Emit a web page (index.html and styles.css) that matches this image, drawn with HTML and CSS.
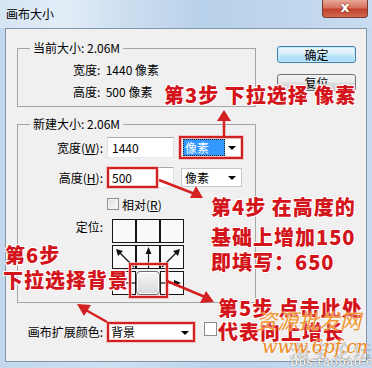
FILE: index.html
```html
<!DOCTYPE html>
<html>
<head>
    <meta charset="utf-8">
    <title>画布大小</title>
    <link rel="stylesheet" href="styles.css">
</head>
<body>
<div class="win">
    <div class="titlebar">
        <span class="title">画布大小</span>
        <div class="close-btn">x</div>
    </div>

    <div class="client">
        <div class="left-col">
            <fieldset class="group group-cur">
                <legend>当前大小: 2.06M</legend>
                <div class="info-row">宽度:&nbsp; 1440 像素</div>
                <div class="info-row">高度:&nbsp; 500 像素</div>
            </fieldset>

            <fieldset class="group group-new">
                <legend>新建大小: 2.06M</legend>
                <div class="form-row row-w">
                    <label class="lbl">宽度(<u>W</u>):</label>
                    <div class="textbox">1440</div>
                    <div class="select"><span class="sel-text focused">像素</span><span class="caret"></span></div>
                </div>
                <div class="form-row row-h">
                    <label class="lbl">高度(<u>H</u>):</label>
                    <div class="textbox">500</div>
                    <div class="select"><span class="sel-text">像素</span><span class="caret"></span></div>
                </div>
                <div class="form-row row-chk">
                    <span class="lbl"></span>
                    <span class="checkbox"></span>
                    <span class="chk-text">相对(<u>R</u>)</span>
                </div>
                <div class="form-row row-anchor">
                    <span class="lbl">定位:</span>
                    <div class="anchor">
                        <div class="cell"></div>
                        <div class="cell"></div>
                        <div class="cell"></div>
                        <div class="cell">
                            <svg width="22" height="22" viewBox="0 0 22 22"><line x1="21" y1="21" x2="7" y2="7" stroke="#111" stroke-width="1.2"/><polygon points="3,3 10,5 5,10" fill="#111"/></svg>
                        </div>
                        <div class="cell">
                            <svg width="22" height="22" viewBox="0 0 22 22"><line x1="11.5" y1="22" x2="11.5" y2="6" stroke="#111" stroke-width="1.2"/><polygon points="11.5,1 8.5,8 14.5,8" fill="#111"/></svg>
                        </div>
                        <div class="cell">
                            <svg width="22" height="22" viewBox="0 0 22 22"><line x1="1" y1="21" x2="15" y2="7" stroke="#111" stroke-width="1.2"/><polygon points="19,3 12,5 17,10" fill="#111"/></svg>
                        </div>
                        <div class="cell">
                            <svg width="22" height="22" viewBox="0 0 22 22"><line x1="22" y1="11" x2="7" y2="11" stroke="#111" stroke-width="1.2"/><polygon points="2,11 9,8 9,14" fill="#111"/></svg>
                        </div>
                        <div class="cell on"></div>
                        <div class="cell">
                            <svg width="22" height="22" viewBox="0 0 22 22"><line x1="0" y1="11" x2="15" y2="11" stroke="#111" stroke-width="1.2"/><polygon points="20,11 13,8 13,14" fill="#111"/></svg>
                        </div>
                    </div>
                </div>
            </fieldset>

            <div class="form-row row-bg">
                <label class="lbl lbl-wide">画布扩展颜色:</label>
                <div class="select select-bg"><span class="sel-text">背景</span><span class="caret"></span></div>
                <span class="swatch"></span>
            </div>
        </div>

        <div class="right-col">
            <div class="btn btn-default">确定</div>
            <div class="btn">复位</div>
        </div>
    </div>

    <!-- red marks drawn over the dialog -->
    <svg class="marks" width="372" height="368" viewBox="0 0 372 368">
        <g fill="none" stroke="#f6b4b4" stroke-width="4" opacity="0.7">
            <rect x="180" y="137" width="62" height="21"/>
            <rect x="108" y="168" width="49" height="19"/>
            <rect x="130" y="264" width="37" height="33"/>
            <rect x="108" y="323" width="86" height="18"/>
        </g>
        <g fill="none" stroke="#d02222" stroke-width="2">
            <rect x="180" y="137" width="62" height="21"/>
            <rect x="108" y="168" width="49" height="19"/>
            <rect x="130" y="264" width="37" height="33"/>
            <rect x="108" y="323" width="86" height="18"/>
        </g>
        <g stroke="#d42020" stroke-width="2.5" fill="#d42020">
            <line x1="224" y1="136" x2="224" y2="118"/>
            <polygon points="224,110 217,121 231,121" stroke="none"/>
            <line x1="159" y1="180" x2="195" y2="194"/>
            <polygon points="203,198 190,198 196,186" stroke="none"/>
            <line x1="107" y1="322" x2="84" y2="309"/>
            <polygon points="77,304 91,305 84,316" stroke="none"/>
            <line x1="167" y1="281" x2="205" y2="297"/>
            <polygon points="214,302 200,303 206,291" stroke="none"/>
        </g>
    </svg>

    <div class="note" style="left:164px;top:84px">第3步 下拉选择 像素</div>
    <div class="note" style="left:211px;top:196px">第4步 在高度的</div>
    <div class="note" style="left:211px;top:226px">基础上增加150</div>
    <div class="note" style="left:211px;top:251px">即填写：650</div>
    <div class="note" style="left:218px;top:297px">第5步 点击此处</div>
    <div class="note" style="left:218px;top:321px">代表向上增长</div>
    <div class="note" style="left:5px;top:244px">第6步</div>
    <div class="note" style="left:3px;top:269px">下拉选择背景</div>

    <div class="mark mark-site" style="left:256px;top:308px">资源批发网</div>
    <div class="mark mark-faint" style="left:290px;top:339px">淘宝论坛</div>
    <div class="mark mark-url" style="left:262px;top:335px">www.6pf.cn</div>
    <div class="mark mark-bbs" style="left:290px;top:355px">bbs.taobao.com</div>
</div>
</body>
</html>
```

FILE: styles.css
```css
body {
    margin: 0;
    font-family: "Noto Sans CJK SC", "Liberation Sans", sans-serif;
    font-size: 12px;
    color: #000;
}

.win {
    position: relative;
    width: 372px;
    height: 368px;
    overflow: hidden;
    display: flex;
    flex-direction: column;
    background: linear-gradient(90deg, #c3d8ec, #cfe0f1 30%, #bcd3eb 60%, #c6dbef);
}

.titlebar {
    height: 28px;
    flex: none;
    display: flex;
    align-items: flex-start;
    background: linear-gradient(90deg, #d6e5f3 0%, #e2edf8 18%, #cfe0f1 32%, #b7d0e9 55%, #bfd5ec 75%, #c9ddf0 100%);
}
.title {
    margin: 6px 0 0 6px;
    line-height: 16px;
    font-size: 12px;
}
.close-btn {
    margin-left: auto;
    margin-right: 4px;
    width: 44px;
    height: 17px;
    border: 1px solid #7a3b30;
    border-top: none;
    border-radius: 0 0 4px 4px;
    background: linear-gradient(#e9a99a, #d7725c 45%, #c2412a 55%, #d2694f);
    color: #fff;
    font: bold 14px "DejaVu Sans", sans-serif;
    line-height: 15px;
    text-align: center;
    text-shadow: 0 0 2px #5a1a10;
}

.client {
    margin: 0 5px;
    height: 334px;
    box-sizing: border-box;
    border: 1px solid #8595a8;
    background: #f0f0f0;
    display: flex;
    padding: 11px 0 0 11px;
}

.left-col {
    width: 239px;
}
.right-col {
    margin: 6px 0 0 21px;
    width: 79px;
}

.group {
    margin: 0;
    padding: 3px 0 3px 0;
    width: 239px;
    box-sizing: border-box;
    border: 1px solid #a5a5a5;
    min-inline-size: 0;
}
.group legend {
    margin-left: 12px;
    padding: 0 3px;
    line-height: 16px;
}
.info-row {
    padding-left: 55px;
    line-height: 22px;
}
.group-new {
    margin-top: 9px;
    padding: 5px 0 7px 0;
}

.form-row {
    display: flex;
    align-items: center;
}
.lbl {
    width: 85px;
    margin-right: 4px;
    text-align: right;
    flex: none;
}
.lbl-wide {
    width: 86px;
}
.row-h {
    margin-top: 9px;
}
.row-chk {
    margin-top: 8px;
    height: 16px;
}
.row-anchor {
    margin-top: 7px;
    align-items: flex-start;
}
.row-anchor .lbl {
    line-height: 16px;
}

.textbox {
    width: 67px;
    height: 21px;
    box-sizing: border-box;
    border: 1px solid;
    border-color: #a4a9b1 #dde2e8 #e3e9ef #dde2e8;
    background: #fff;
    padding-left: 4px;
    line-height: 19px;
}

.select {
    position: relative;
    margin-left: 7px;
    width: 61px;
    height: 19px;
    box-sizing: border-box;
    border: 1px solid #c9c9c9;
    background: #fff;
    padding: 1px;
}
.sel-text {
    display: block;
    width: 39px;
    height: 15px;
    line-height: 15px;
    padding-left: 1px;
    border: 1px dotted transparent;
    box-sizing: content-box;
    margin-top: -1px;
}
.sel-text.focused {
    background: #3399ff;
    color: #fff;
    border-color: #222;
}
.caret {
    position: absolute;
    right: 5px;
    top: 7px;
    border-left: 4px solid transparent;
    border-right: 4px solid transparent;
    border-top: 4px solid #000;
}

.checkbox {
    width: 12px;
    height: 12px;
    box-sizing: border-box;
    border: 1px solid #8e8f8f;
    background: linear-gradient(135deg, #dcdcdc, #fbfbfb);
    box-shadow: inset 0 0 0 1px #f4f4f4;
}
.chk-text {
    margin-left: 3px;
}

.anchor {
    margin-left: 5px;
    display: grid;
    grid-template-columns: repeat(3, 24px);
    grid-template-rows: repeat(3, 24px);
    row-gap: 2px;
}
.cell {
    box-sizing: border-box;
    border: 1px solid #151515;
    background: #fafafa;
}
.cell svg {
    display: block;
}
.cell.on {
    border: 1px solid #6a6a6a;
    border-radius: 4px;
    background: linear-gradient(#f6f6f6, #d9d9d9);
    box-shadow: inset 0 0 0 1px #fff;
}

.row-bg {
    margin-top: 19px;
    align-items: flex-start;
}
.row-bg .lbl {
    line-height: 20px;
}
.select-bg {
    margin-left: 0;
    width: 88px;
    height: 20px;
}
.select-bg .caret {
    top: 8px;
}
.swatch {
    margin-left: 9px;
    width: 13px;
    height: 14px;
    box-sizing: border-box;
    border: 1px solid #8a8a8a;
    background: #fff;
}

.btn {
    height: 17px;
    box-sizing: border-box;
    border: 1px solid #707070;
    border-radius: 3px;
    background: linear-gradient(#f2f2f2 0%, #ebebeb 48%, #dddddd 52%, #cfcfcf 100%);
    text-align: center;
    line-height: 15px;
    margin-bottom: 11px;
}
.btn-default {
    border-color: #3c7fb1;
    background: linear-gradient(#eaf6fd 0%, #d9f0fc 48%, #bee6fd 52%, #a7d9f5 100%);
    box-shadow: inset 0 0 0 1px #cdeafb;
}

.marks {
    position: absolute;
    left: 0;
    top: 0;
}

.note {
    position: absolute;
    font-size: 20px;
    line-height: 22px;
    font-weight: 900;
    color: #d3141a;
    letter-spacing: 1px;
    white-space: nowrap;
    text-shadow: 1px 1px 0 #fff, -1px -1px 0 #fff, 1px -1px 0 #fff, -1px 1px 0 #fff, 0 0 3px #f9c4c4;
}

.mark {
    position: absolute;
    white-space: nowrap;
}
.mark-site {
    font-size: 21px;
    line-height: 24px;
    font-style: italic;
    color: #f0962e;
    text-shadow: 0 0 2px #fff;
}
.mark-faint {
    font-size: 19px;
    line-height: 24px;
    font-weight: bold;
    color: rgba(120, 120, 120, 0.3);
    letter-spacing: 2px;
}
.mark-url {
    font-family: "DejaVu Serif", serif;
    font-size: 18px;
    line-height: 24px;
    font-style: italic;
    color: #ee8a1e;
    text-shadow: 0 0 2px #fff;
}
.mark-bbs {
    font-family: "DejaVu Serif", serif;
    font-size: 12px;
    line-height: 14px;
    color: #fff;
    text-shadow: 0 0 1px #777, 0 0 1px #777;
    letter-spacing: 0.5px;
}
```
